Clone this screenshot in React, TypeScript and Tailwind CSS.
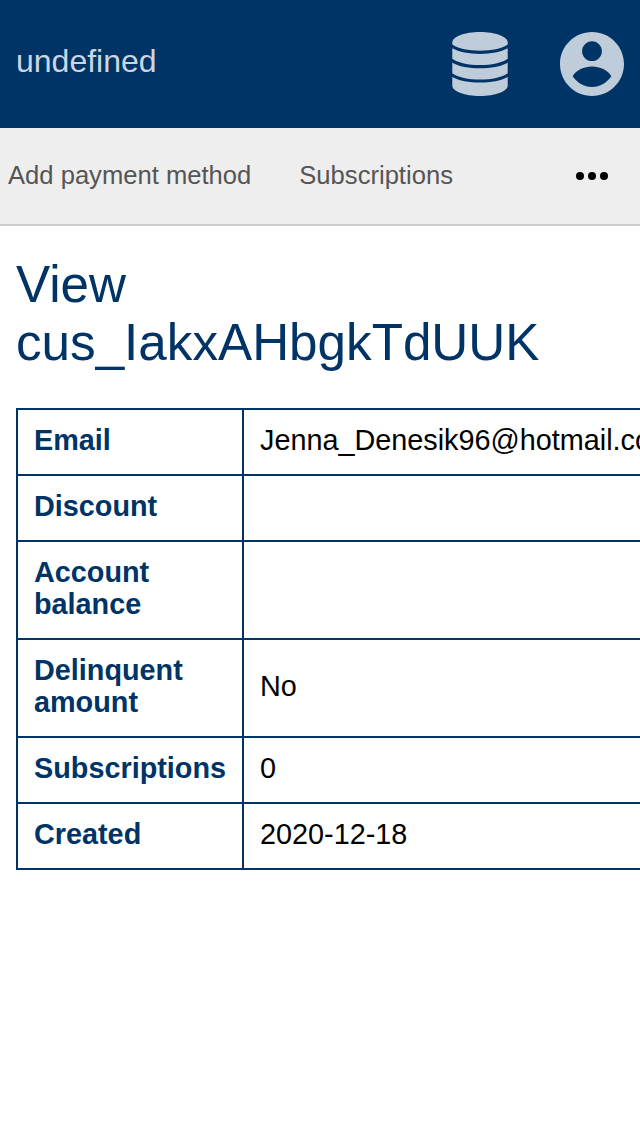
import React from "react";

const rows = [
  { label: "Email", value: "Jenna_Denesik96@hotmail.com" },
  { label: "Discount", value: "" },
  { label: "Account balance", value: "" },
  { label: "Delinquent amount", value: "No" },
  { label: "Subscriptions", value: "0" },
  { label: "Created", value: "2020-12-18" },
];

function DatabaseIcon() {
  return (
    <svg viewBox="0 0 56 64" className="h-16 w-14" fill="#bfccd9">
      <path d="M28 0C43 0 55.7 4.6 55.7 10.3V12.6C50 16.8 39.5 18.8 28 18.8S6 16.8 .3 12.6V10.3C.3 4.6 13 0 28 0Z" />
      <path d="M.3 16.3C7 20.2 17 21.9 28 21.9S49 20.2 55.7 16.3V26.8C50 31 39.5 33.1 28 33.1S6 31 .3 26.8Z" />
      <path d="M.3 30.7C7 34.6 17 36.3 28 36.3S49 34.6 55.7 30.7V41.2C50 45.4 39.5 47.5 28 47.5S6 45.4 .3 41.2Z" />
      <path d="M.3 45C7 48.9 17 50.6 28 50.6S49 48.9 55.7 45V53.8C55.7 59.4 43 64 28 64S.3 59.4 .3 53.8Z" />
    </svg>
  );
}

function AccountIcon() {
  return (
    <svg viewBox="2 2 20 20" className="size-16" fill="#bfccd9">
      <path d="M12 2C6.48 2 2 6.48 2 12s4.48 10 10 10 10-4.48 10-10S17.52 2 12 2zm0 2.9c1.7 0 3.1 1.4 3.1 3.1s-1.4 3.1-3.1 3.1-3.1-1.4-3.1-3.1 1.4-3.1 3.1-3.1zm0 14.3c-2.5 0-4.71-1.38-6.05-3.35 1.1-1.95 3.6-3.03 6.05-3.03s4.95 1.08 6.05 3.03c-1.34 1.97-3.55 3.35-6.05 3.35z" />
    </svg>
  );
}

export default function App() {
  return (
    <div className="h-[1136px] w-full overflow-hidden bg-white font-['Liberation_Sans',Arial,sans-serif] text-black">
      <header className="flex h-32 items-center justify-between bg-[#003366] px-4">
        <span className="pb-1.5 text-[32px] leading-[48px] text-[#ccd6e0]">undefined</span>
        <div className="flex items-center gap-[52px]">
          <DatabaseIcon />
          <AccountIcon />
        </div>
      </header>
      <nav className="flex h-[98px] items-center border-b-2 border-[#cccccc] bg-[#eeeeee] pr-8 pl-2 text-[25.6px] text-[#555555]">
        <a className="pb-0.5">Add payment method</a>
        <a className="ml-12 pb-0.5">Subscriptions</a>
        <svg viewBox="0 0 32 8" className="ml-auto h-2 w-8" fill="#000000">
          <circle cx="4" cy="4" r="4" />
          <circle cx="16" cy="4" r="4" />
          <circle cx="28" cy="4" r="4" />
        </svg>
      </nav>
      <main className="px-4 pt-[30px]">
        <h1 className="text-[51.2px] leading-[58px] text-[#003366]">
          View
          <br />
          cus_IakxAHbgkTdUUK
        </h1>
        <table className="mt-9 w-[700px] table-fixed border-collapse text-[28.8px] leading-8">
          <colgroup>
            <col className="w-[226px]" />
            <col />
          </colgroup>
          <tbody>
            {rows.map((row) => (
              <tr key={row.label}>
                <th className="border-2 border-[#003366] px-4 pt-3.5 pb-[18px] text-left font-bold text-[#003366]">{row.label}</th>
                <td className="border-2 border-[#003366] px-4 pt-3.5 pb-[18px]">{row.value}</td>
              </tr>
            ))}
          </tbody>
        </table>
      </main>
    </div>
  );
}
